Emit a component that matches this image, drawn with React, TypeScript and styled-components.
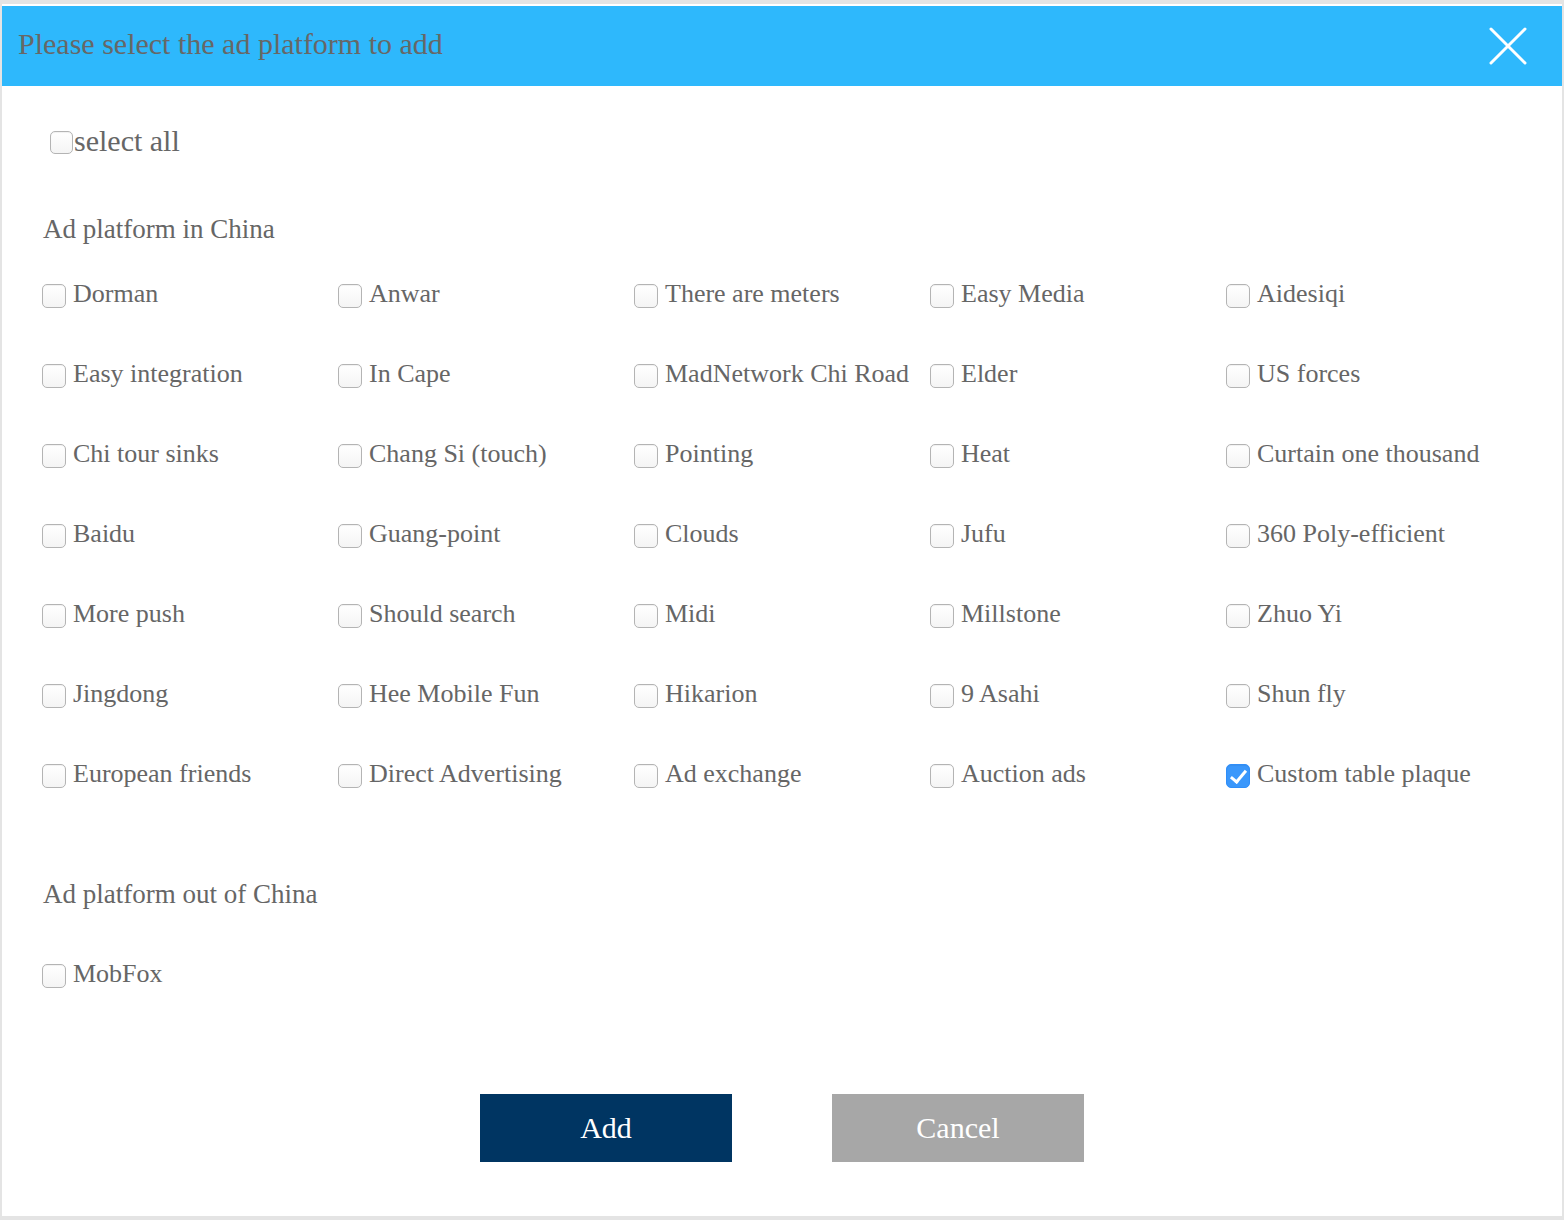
import * as React from 'react';
import styled, { createGlobalStyle } from 'styled-components';

const GlobalStyle = createGlobalStyle`
  html, body {
    margin: 0;
    padding: 0;
    background: #e4e4e4;
  }
  body {
    font-family: "Liberation Serif", "Times New Roman", serif;
  }
`;

const Page = styled.div`
  padding: 4px 2px 4px 2px;
`;

const Modal = styled.div`
  background: #ffffff;
  padding-top: 2px;
  height: 1210px;
  display: flex;
  flex-direction: column;
`;

const Header = styled.div`
  height: 80px;
  background: #2eb8fc;
  display: flex;
  align-items: center;
  justify-content: space-between;
  padding: 0 34px 0 16px;
`;

const Title = styled.h2`
  margin: 0;
  font-weight: normal;
  font-size: 30px;
  color: #676767;
  padding-bottom: 4px;
`;

const CloseButton = styled.button`
  width: 40px;
  height: 40px;
  padding: 0;
  border: none;
  background: transparent;
  cursor: pointer;
  display: flex;
  align-items: center;
  justify-content: center;
`;

const Body = styled.div`
  padding: 0 0 0 40px;
  flex: 1;
`;

const SelectAllRow = styled.label`
  display: flex;
  align-items: center;
  gap: 1px;
  height: 40px;
  margin-top: 35px;
  margin-left: 8px;
  font-size: 30px;
  color: #666;
  cursor: pointer;
`;

const SectionTitle = styled.h3<{ $gap: number }>`
  margin: ${(p) => p.$gap}px 0 0 1px;
  height: 40px;
  line-height: 40px;
  font-size: 27px;
  font-weight: normal;
  color: #666;
`;

const Grid = styled.div<{ $gap: number }>`
  margin-top: ${(p) => p.$gap}px;
  display: grid;
  grid-template-columns: repeat(5, 296px);
  grid-auto-rows: 80px;
`;

const Option = styled.label`
  display: flex;
  align-items: center;
  gap: 7px;
  font-size: 26px;
  color: #666;
  white-space: nowrap;
  cursor: pointer;
`;

const Box = styled.input`
  appearance: none;
  -webkit-appearance: none;
  margin: 0;
  width: 24px;
  height: 24px;
  flex: none;
  border: 1px solid #b4b4b4;
  border-radius: 5px;
  background: linear-gradient(#ffffff, #f4f4f4);
  box-shadow: inset 0 1px 1px rgba(0, 0, 0, 0.06);
  position: relative;
  top: 2px;
  cursor: pointer;

  &:checked {
    border-color: #2f8ef9;
    background: #3a97fb;
  }
  &:checked::after {
    content: '';
    position: absolute;
    left: 7px;
    top: 2px;
    width: 6px;
    height: 13px;
    border: solid #fff;
    border-width: 0 3px 3px 0;
    transform: rotate(40deg);
  }
`;

const SmallBox = styled(Box)`
  width: 23px;
  height: 23px;
  top: 1px;
`;

const Actions = styled.div`
  margin: 80px 0 0 -40px;
  display: flex;
  justify-content: center;
  gap: 100px;
`;

const ActionButton = styled.button<{ $tone: 'primary' | 'muted' }>`
  width: 252px;
  height: 68px;
  border: none;
  color: #fff;
  font-family: "Liberation Serif", "Times New Roman", serif;
  font-size: 30px;
  padding-bottom: 2px;
  background: ${(p) => (p.$tone === 'primary' ? '#003562' : '#a7a7a7')};
  cursor: pointer;
`;

const china = [
  'Dorman', 'Anwar', 'There are meters', 'Easy Media', 'Aidesiqi',
  'Easy integration', 'In Cape', 'MadNetwork Chi Road', 'Elder', 'US forces',
  'Chi tour sinks', 'Chang Si (touch)', 'Pointing', 'Heat', 'Curtain one thousand',
  'Baidu', 'Guang-point', 'Clouds', 'Jufu', '360 Poly-efficient',
  'More push', 'Should search', 'Midi', 'Millstone', 'Zhuo Yi',
  'Jingdong', 'Hee Mobile Fun', 'Hikarion', '9 Asahi', 'Shun fly',
  'European friends', 'Direct Advertising', 'Ad exchange', 'Auction ads', 'Custom table plaque',
];

const abroad = ['MobFox'];

const CloseIcon = () => (
  <svg width="38" height="38" viewBox="0 0 38 38">
    <path d="M2 2 L36 36 M36 2 L2 36" stroke="#fff" strokeWidth="3" strokeLinecap="round" />
  </svg>
);

export default function App() {
  const [checked, setChecked] = React.useState<Record<string, boolean>>({
    'Custom table plaque': true,
  });
  const all = [...china, ...abroad];
  const allOn = all.every((n) => checked[n]);

  const toggle = (name: string) =>
    setChecked((c) => ({ ...c, [name]: !c[name] }));

  const toggleAll = () => {
    const next: Record<string, boolean> = {};
    all.forEach((n) => (next[n] = !allOn));
    setChecked(next);
  };

  return (
    <>
      <GlobalStyle />
      <Page>
        <Modal>
          <Header>
            <Title>Please select the ad platform to add</Title>
            <CloseButton type="button" aria-label="close">
              <CloseIcon />
            </CloseButton>
          </Header>
          <Body>
            <SelectAllRow>
              <SmallBox type="checkbox" checked={allOn} onChange={toggleAll} />
              select all
            </SelectAllRow>

            <SectionTitle $gap={48}>Ad platform in China</SectionTitle>
            <Grid $gap={5}>
              {china.map((name) => (
                <Option key={name}>
                  <Box type="checkbox" checked={!!checked[name]} onChange={() => toggle(name)} />
                  {name}
                </Option>
              ))}
            </Grid>

            <SectionTitle $gap={60}>Ad platform out of China</SectionTitle>
            <Grid $gap={20}>
              {abroad.map((name) => (
                <Option key={name}>
                  <Box type="checkbox" checked={!!checked[name]} onChange={() => toggle(name)} />
                  {name}
                </Option>
              ))}
            </Grid>

            <Actions>
              <ActionButton type="button" $tone="primary">Add</ActionButton>
              <ActionButton type="button" $tone="muted">Cancel</ActionButton>
            </Actions>
          </Body>
        </Modal>
      </Page>
    </>
  );
}
